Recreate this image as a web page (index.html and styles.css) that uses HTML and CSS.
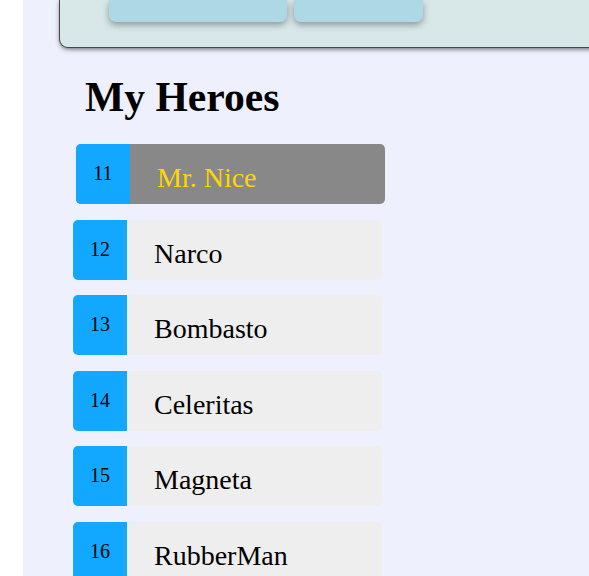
FILE: index.html
```
<!DOCTYPE html>
<html>
<head>
<meta charset="utf-8">
<link rel="stylesheet" href="styles.css">
</head>
<body>
<div class="page">
  <div class="panel">
    <div class="nav">
      <span class="nav-btn nav-btn-wide"></span>
      <span class="nav-btn nav-btn-narrow"></span>
    </div>
  </div>
  <h2 class="title">My Heroes</h2>
  <ul class="heroes">
    <li class="hero selected"><span class="badge">11</span><span class="name">Mr. Nice</span></li>
    <li class="hero"><span class="badge">12</span><span class="name">Narco</span></li>
    <li class="hero"><span class="badge">13</span><span class="name">Bombasto</span></li>
    <li class="hero"><span class="badge">14</span><span class="name">Celeritas</span></li>
    <li class="hero"><span class="badge">15</span><span class="name">Magneta</span></li>
    <li class="hero"><span class="badge">16</span><span class="name">RubberMan</span></li>
  </ul>
</div>
</body>
</html>
```
FILE: styles.css
```
html, body {
  margin: 0;
  padding: 0;
  background: #ffffff;
  overflow: hidden;
  height: 576px;
}
.page {
  margin-left: 23px;
  background: #eef0fd;
  height: 576px;
  padding-left: 37px;
  font-family: "Liberation Serif", "Times New Roman", serif;
  overflow: hidden;
}
.panel {
  height: 47px;
  background: #d8e8e8;
  border-radius: 0 0 0 8px;
  box-shadow: 0 0 0 1px #47474c, 0 2px 5px rgba(0, 0, 0, 0.6);
  margin-right: -10px;
}
.nav {
  display: flex;
  gap: 7px;
  padding-left: 49px;
}
.nav-btn {
  display: block;
  height: 22px;
  background: #add8e6;
  border-radius: 0 0 7px 7px;
  box-shadow: 0 3px 7px rgba(0, 0, 0, 0.35);
}
.nav-btn-wide { width: 178px; }
.nav-btn-narrow { width: 129px; }
.title {
  margin: 26px 0 0 25px;
  font-size: 41.6px;
  font-weight: bold;
  line-height: normal;
  color: #000;
}
.heroes {
  list-style: none;
  margin: 23px 0 0 13px;
  padding: 0;
  width: 309px;
}
.hero {
  display: flex;
  align-items: flex-start;
  height: 60px;
  margin-bottom: 15.5px;
  background: #eeeeee;
  border-radius: 5px;
  position: relative;
  overflow: hidden;
}
.hero.selected {
  background: #888888;
  left: 3px;
  top: -0.5px;
}
.badge {
  width: 54px;
  height: 60px;
  box-sizing: border-box;
  padding-top: 19px;
  background: #12a8ff;
  text-align: center;
  font-size: 20px;
  line-height: 20px;
  color: #000;
  flex: none;
}
.name {
  margin-left: 27px;
  padding-top: 20px;
  font-size: 28px;
  line-height: 28px;
  color: #000;
}
.selected .name {
  color: #ffd700;
}
```
